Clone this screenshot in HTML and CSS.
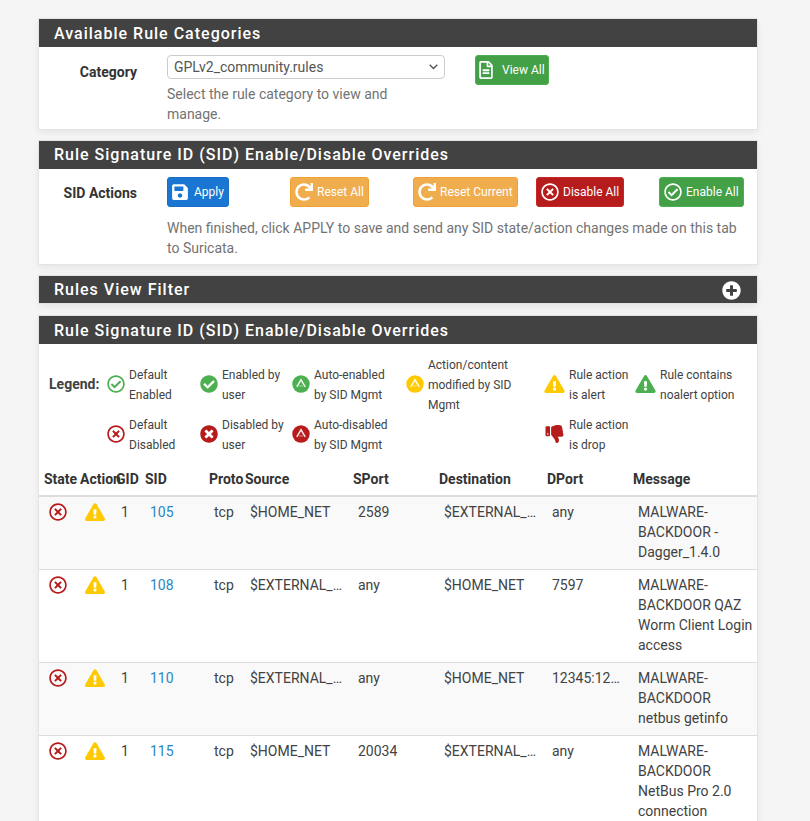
FILE: index.html
```html
<!DOCTYPE html>
<html lang="en">
<head>
    <meta charset="UTF-8">
    <meta name="viewport" content="width=device-width, initial-scale=1.0">
    <title>Suricata Rules</title>
    <link rel="stylesheet" href="styles.css">
</head>
<body>
    <!-- Icon set, reused below with <use> -->
    <svg class="icon-defs" aria-hidden="true">
        <symbol id="i-save" viewBox="0 0 448 512"><path d="M433.941 129.941l-83.882-83.882A48 48 0 0 0 316.118 32H48C21.49 32 0 53.49 0 80v352c0 26.51 21.49 48 48 48h352c26.51 0 48-21.49 48-48V163.882a48 48 0 0 0-14.059-33.941zM224 416c-35.346 0-64-28.654-64-64 0-35.346 28.654-64 64-64s64 28.654 64 64c0 35.346-28.654 64-64 64zm96-304.52V212c0 6.627-5.373 12-12 12H76c-6.627 0-12-5.373-12-12V108c0-6.627 5.373-12 12-12h228.52c3.183 0 6.235 1.264 8.485 3.515l3.48 3.48A11.996 11.996 0 0 1 320 111.48z"/></symbol>
        <symbol id="i-redo" viewBox="0 0 512 512"><path d="M500.33 0h-47.41a12 12 0 0 0-12 12.57l4 82.76A247.42 247.42 0 0 0 256 8C119.34 8 8.05 119.53 8 256.19 7.95 393.07 119.06 504 256 504a247.1 247.1 0 0 0 166.18-63.91 12 12 0 0 0 .48-17.43l-34-34a12 12 0 0 0-16.38-.55A176 176 0 1 1 402.1 157.8l-101.53-4.87a12 12 0 0 0-12.57 12v47.41a12 12 0 0 0 12 12h200.33a12 12 0 0 0 12-12V12a12 12 0 0 0-12-12z"/></symbol>
        <symbol id="i-file" viewBox="0 0 384 512"><path d="M288 248v28c0 6.6-5.4 12-12 12H108c-6.6 0-12-5.4-12-12v-28c0-6.6 5.4-12 12-12h168c6.6 0 12 5.4 12 12zm-12 72H108c-6.6 0-12 5.4-12 12v28c0 6.6 5.4 12 12 12h168c6.6 0 12-5.4 12-12v-28c0-6.6-5.4-12-12-12zm108-188.1V464c0 26.5-21.5 48-48 48H48c-26.5 0-48-21.5-48-48V48C0 21.5 21.5 0 48 0h204.1C264.8 0 277 5.1 286 14.1L369.9 98c9 8.9 14.1 21.2 14.1 33.9zm-128-80V128h76.1L256 51.9zM336 464V176H232c-13.3 0-24-10.7-24-24V48H48v416h288z"/></symbol>
        <symbol id="i-times-o" viewBox="0 0 512 512"><path d="M256 8C119 8 8 119 8 256s111 248 248 248 248-111 248-248S393 8 256 8zm0 448c-110.5 0-200-89.5-200-200S145.5 56 256 56s200 89.5 200 200-89.5 200-200 200zm101.8-262.2L295.6 256l62.2 62.2c4.7 4.7 4.7 12.3 0 17l-22.6 22.6c-4.7 4.7-12.3 4.7-17 0L256 295.6l-62.2 62.2c-4.7 4.7-12.3 4.7-17 0l-22.6-22.6c-4.7-4.7-4.7-12.3 0-17l62.2-62.2-62.2-62.2c-4.7-4.7-4.7-12.3 0-17l22.6-22.6c4.7-4.7 12.3-4.7 17 0l62.2 62.2 62.2-62.2c4.7-4.7 12.3-4.7 17 0l22.6 22.6c4.7 4.7 4.7 12.3 0 17z"/></symbol>
        <symbol id="i-check-o" viewBox="0 0 512 512"><path d="M256 8C119.033 8 8 119.033 8 256s111.033 248 248 248 248-111.033 248-248S392.967 8 256 8zm0 48c110.532 0 200 89.451 200 200 0 110.532-89.451 200-200 200-110.532 0-200-89.451-200-200 0-110.532 89.451-200 200-200m140.204 130.267l-22.536-22.718c-4.667-4.705-12.265-4.736-16.97-.068L215.346 303.697l-59.792-60.277c-4.667-4.705-12.265-4.736-16.97-.069l-22.719 22.536c-4.705 4.667-4.736 12.265-.068 16.971l90.781 91.516c4.667 4.705 12.265 4.736 16.97.068l172.589-171.204c4.704-4.668 4.734-12.266.067-16.971z"/></symbol>
        <symbol id="i-check" viewBox="0 0 512 512"><path d="M504 256c0 136.967-111.033 248-248 248S8 392.967 8 256 119.033 8 256 8s248 111.033 248 248zM227.314 387.314l184-184c6.248-6.248 6.248-16.379 0-22.627l-22.627-22.627c-6.248-6.249-16.379-6.249-22.628 0L216 308.118l-70.059-70.059c-6.248-6.248-16.379-6.248-22.628 0l-22.627 22.627c-6.248 6.248-6.248 16.379 0 22.627l104 104c6.249 6.249 16.379 6.249 22.628.001z"/></symbol>
        <symbol id="i-times" viewBox="0 0 512 512"><path d="M256 8C119 8 8 119 8 256s111 248 248 248 248-111 248-248S393 8 256 8zm121.6 313.1c4.7 4.7 4.7 12.3 0 17L338 377.6c-4.7 4.7-12.3 4.7-17 0L256 312l-65.1 65.6c-4.7 4.7-12.3 4.7-17 0L134.4 338c-4.7-4.7-4.7-12.3 0-17l65.6-65-65.6-65.1c-4.7-4.7-4.7-12.3 0-17l39.6-39.6c4.7-4.7 12.3-4.7 17 0l65 65.7 65.1-65.6c4.7-4.7 12.3-4.7 17 0l39.6 39.6c4.7 4.7 4.7 12.3 0 17L312 256l65.6 65.1z"/></symbol>
        <symbol id="i-auto" viewBox="0 0 512 512">
            <circle cx="256" cy="256" r="248"/>
            <path class="auto-mark" d="M136 340L256 136L376 340"/>
            <path class="auto-bar" d="M196 312H316"/>
        </symbol>
        <symbol id="i-warn" viewBox="0 0 576 512"><path d="M569.517 440.013C587.975 472.007 564.806 512 527.94 512H48.054c-36.937 0-59.999-40.055-41.577-71.987L246.423 24.995c18.467-32.009 64.72-31.951 83.154 0l239.94 415.018zM288 354c-25.405 0-46 20.595-46 46s20.595 46 46 46 46-20.595 46-46-20.595-46-46-46zm-43.673-165.346l7.418 136c.347 6.364 5.609 11.346 11.982 11.346h48.546c6.373 0 11.635-4.982 11.982-11.346l7.418-136c.375-6.874-5.098-12.654-11.982-12.654h-63.383c-6.884 0-12.356 5.78-11.981 12.654z"/></symbol>
        <symbol id="i-drop" viewBox="0 0 512 512"><path d="M0 56v240c0 13.255 10.745 24 24 24h80c13.255 0 24-10.745 24-24V56c0-13.255-10.745-24-24-24H24C10.745 32 0 42.745 0 56zm40 200c0-13.255 10.745-24 24-24s24 10.745 24 24-10.745 24-24 24-24-10.745-24-24zm272 256c-20.183 0-29.485-39.293-33.931-57.795-5.206-21.666-10.589-44.07-25.393-58.902-32.469-32.524-49.503-73.967-89.117-113.111a11.98 11.98 0 0 1-3.558-8.521V59.901c0-6.541 5.243-11.878 11.783-11.998 15.831-.29 36.694-9.079 52.651-16.178C256.189 17.598 295.709.017 343.995 0h2.844c42.777 0 93.363.413 113.774 29.737 8.392 12.057 10.446 27.034 6.148 44.632 16.312 17.053 25.063 48.863 16.382 74.757 17.544 23.432 19.143 56.132 9.308 79.469l.11.11c11.893 11.949 19.523 31.259 19.439 49.197-.156 30.352-26.157 58.098-59.553 58.098H350.723C358.03 364.34 384 388.132 384 430.548 384 496 336 512 312 512z"/></symbol>
        <symbol id="i-plus" viewBox="0 0 512 512"><path d="M256 8C119 8 8 119 8 256s111 248 248 248 248-111 248-248S393 8 256 8zm144 276c0 6.6-5.4 12-12 12h-92v92c0 6.6-5.4 12-12 12h-56c-6.6 0-12-5.4-12-12v-92h-92c-6.6 0-12-5.4-12-12v-56c0-6.6 5.4-12 12-12h92v-92c0-6.6 5.4-12 12-12h56c6.6 0 12 5.4 12 12v92h92c6.6 0 12 5.4 12 12v56z"/></symbol>
    </svg>

    <div class="container">
        <section class="panel">
            <h2 class="panel-title panel-title-low">Available Rule Categories</h2>
            <div class="panel-body category-body">
                <label class="row-label" for="category">Category</label>
                <div class="category-field">
                    <select id="category" class="select">
                        <option>GPLv2_community.rules</option>
                    </select>
                    <p class="help">Select the rule category to view and manage.</p>
                </div>
                <button class="btn btn-green btn-view"><svg class="icon icon-file"><use href="#i-file"/></svg>View All</button>
            </div>
        </section>

        <section class="panel">
            <h2 class="panel-title">Rule Signature ID (SID) Enable/Disable Overrides</h2>
            <div class="panel-body actions-body">
                <div class="row-label">SID Actions</div>
                <div class="actions">
                    <div class="action-buttons">
                        <div><button class="btn btn-blue btn-apply"><svg class="icon icon-save"><use href="#i-save"/></svg>Apply</button></div>
                        <div><button class="btn btn-orange"><svg class="icon"><use href="#i-redo"/></svg>Reset All</button></div>
                        <div><button class="btn btn-orange"><svg class="icon"><use href="#i-redo"/></svg>Reset Current</button></div>
                        <div><button class="btn btn-red"><svg class="icon"><use href="#i-times-o"/></svg>Disable All</button></div>
                        <div><button class="btn btn-green"><svg class="icon"><use href="#i-check-o"/></svg>Enable All</button></div>
                    </div>
                    <p class="help help-actions">When finished, click APPLY to save and send any SID state/action changes made on this tab to Suricata.</p>
                </div>
            </div>
        </section>

        <section class="panel panel-collapsed">
            <h2 class="panel-title panel-title-short">Rules View Filter<svg class="icon icon-plus"><use href="#i-plus"/></svg></h2>
        </section>

        <section class="panel panel-rules">
            <h2 class="panel-title panel-title-low">Rule Signature ID (SID) Enable/Disable Overrides</h2>

            <div class="legend">
                <div class="legend-title">Legend:</div>
                <div class="legend-item"><svg class="icon c-green"><use href="#i-check-o"/></svg><span>Default Enabled</span></div>
                <div class="legend-item"><svg class="icon c-green"><use href="#i-check"/></svg><span>Enabled by user</span></div>
                <div class="legend-item legend-item-auto"><svg class="icon c-green"><use href="#i-auto"/></svg><span>Auto-enabled by SID Mgmt</span></div>
                <div class="legend-item"><svg class="icon c-yellow"><use href="#i-auto"/></svg><span>Action/content modified by SID Mgmt</span></div>
                <div class="legend-item"><svg class="icon icon-warn c-yellow"><use href="#i-warn"/></svg><span>Rule action is alert</span></div>
                <div class="legend-item"><svg class="icon icon-warn c-green"><use href="#i-warn"/></svg><span>Rule contains noalert option</span></div>
                <div></div>
                <div class="legend-item"><svg class="icon c-red"><use href="#i-times-o"/></svg><span>Default Disabled</span></div>
                <div class="legend-item"><svg class="icon c-red"><use href="#i-times"/></svg><span>Disabled by user</span></div>
                <div class="legend-item legend-item-auto"><svg class="icon c-red"><use href="#i-auto"/></svg><span>Auto-disabled by SID Mgmt</span></div>
                <div></div>
                <div class="legend-item"><svg class="icon icon-warn c-red"><use href="#i-drop"/></svg><span>Rule action is drop</span></div>
                <div></div>
            </div>

            <table class="rules">
                <colgroup>
                    <col class="col-state"><col class="col-action"><col class="col-gid"><col class="col-sid"><col class="col-proto">
                    <col class="col-source"><col class="col-sport"><col class="col-dest"><col class="col-dport"><col class="col-msg">
                </colgroup>
                <thead>
                    <tr>
                        <th>State</th><th>Action</th><th class="th-gid">GID</th><th>SID</th><th>Proto</th>
                        <th>Source</th><th>SPort</th><th>Destination</th><th>DPort</th><th>Message</th>
                    </tr>
                </thead>
                <tbody>
                    <tr>
                        <td><svg class="icon c-red"><use href="#i-times-o"/></svg></td>
                        <td><svg class="icon icon-warn c-yellow"><use href="#i-warn"/></svg></td>
                        <td>1</td><td><a href="#">105</a></td><td>tcp</td>
                        <td class="clip">$HOME_NET</td><td class="clip">2589</td><td class="clip">$EXTERNAL_NET</td><td class="clip">any</td>
                        <td>MALWARE-BACKDOOR - Dagger_1.4.0</td>
                    </tr>
                    <tr>
                        <td><svg class="icon c-red"><use href="#i-times-o"/></svg></td>
                        <td><svg class="icon icon-warn c-yellow"><use href="#i-warn"/></svg></td>
                        <td>1</td><td><a href="#">108</a></td><td>tcp</td>
                        <td class="clip">$EXTERNAL_NET</td><td class="clip">any</td><td class="clip">$HOME_NET</td><td class="clip">7597</td>
                        <td>MALWARE-BACKDOOR QAZ Worm Client Login access</td>
                    </tr>
                    <tr>
                        <td><svg class="icon c-red"><use href="#i-times-o"/></svg></td>
                        <td><svg class="icon icon-warn c-yellow"><use href="#i-warn"/></svg></td>
                        <td>1</td><td><a href="#">110</a></td><td>tcp</td>
                        <td class="clip">$EXTERNAL_NET</td><td class="clip">any</td><td class="clip">$HOME_NET</td><td class="clip">12345:12346</td>
                        <td>MALWARE-BACKDOOR netbus getinfo</td>
                    </tr>
                    <tr>
                        <td><svg class="icon c-red"><use href="#i-times-o"/></svg></td>
                        <td><svg class="icon icon-warn c-yellow"><use href="#i-warn"/></svg></td>
                        <td>1</td><td><a href="#">115</a></td><td>tcp</td>
                        <td class="clip">$HOME_NET</td><td class="clip">20034</td><td class="clip">$EXTERNAL_NET</td><td class="clip">any</td>
                        <td>MALWARE-BACKDOOR NetBus Pro 2.0 connection</td>
                    </tr>
                </tbody>
            </table>
        </section>
    </div>
</body>
</html>
```
FILE: styles.css
```css
html, body {
    height: 100%;
    overflow: hidden;
}

body {
    font-family: Roboto, "Liberation Sans", sans-serif;
    font-size: 14px;
    line-height: 20px;
    margin: 0;
    padding: 0;
    background-color: #f5f5f5;
    color: #424242;
}

.icon-defs {
    display: none;
}

.container {
    width: 718px;
    margin-left: 39px;
    padding-top: 19px;
}

/* Panels */
.panel {
    background-color: #fff;
    margin-bottom: 12px;
    box-shadow: 0 0 0 1px #e4e4e4, 0 3px 8px rgba(0, 0, 0, 0.08);
}

.panel-collapsed {
    margin-bottom: 13px;
}

.panel-title {
    display: flex;
    justify-content: space-between;
    align-items: center;
    margin: 0;
    padding: 4px 15px;
    background-color: #424242;
    color: #fff;
    font-size: 16px;
    font-weight: 500;
    letter-spacing: 1px;
    line-height: 20px;
}

.panel-title-low {
    padding-top: 5px;
    padding-bottom: 3px;
}

.panel-title-short {
    height: 19px;
    padding-right: 16px;
}

.panel-body {
    display: flex;
    background-color: #fff;
}

.row-label {
    width: 98px;
    flex-shrink: 0;
    text-align: right;
    font-weight: 700;
    color: #333;
}

.help {
    margin: 0;
    color: #737373;
}

/* Category row */
.category-body {
    padding-top: 8px;
    padding-bottom: 5px;
}

.category-body .row-label {
    padding-top: 7px;
}

.category-field {
    width: 278px;
    margin-left: 30px;
}

.select {
    display: block;
    width: 100%;
    height: 24px;
    padding: 0 24px 0 6px;
    border: 1px solid #ccc;
    border-radius: 4px;
    background: #fff url("data:image/svg+xml,%3Csvg xmlns='http://www.w3.org/2000/svg' width='9' height='6'%3E%3Cpath d='M.7.8l3.8 3.8L8.3.8' fill='none' stroke='%23555' stroke-width='1.4'/%3E%3C/svg%3E") no-repeat right 6px center;
    appearance: none;
    color: #555;
    font-family: inherit;
    font-size: 14px;
    margin-bottom: 5px;
}

.category-field .help {
    margin-top: 5px;
}

/* SID actions */
.actions-body {
    padding-top: 8px;
    padding-bottom: 6px;
}

.actions-body .row-label {
    padding-top: 6px;
}

.actions {
    margin-left: 30px;
}

.action-buttons {
    display: grid;
    grid-template-columns: repeat(5, 123px);
}

.help-actions {
    width: 580px;
    margin-top: 11px;
}

/* Buttons */
.btn {
    display: inline-flex;
    align-items: center;
    height: 30px;
    padding: 0 4px;
    border: 1px solid transparent;
    border-radius: 3px;
    color: #fff;
    font-family: inherit;
    font-size: 12px;
    white-space: nowrap;
    cursor: pointer;
}

.btn .icon {
    margin-right: 4px;
}

.btn .icon-save {
    margin-right: 6px;
}

.btn .icon-file {
    width: 14px;
    margin-right: 9px;
}

.btn-view {
    margin-left: 30px;
    padding: 0 3px;
}

.btn-blue {
    background-color: #1976d2;
    border-color: #1a6fc4;
}

.btn-orange {
    background-color: #f0ad4e;
    border-color: #eea236;
}

.btn-red {
    background-color: #b71c1c;
    border-color: #c62828;
}

.btn-green {
    background-color: #43a047;
    border-color: #4caf50;
}

/* Icons */
.icon {
    width: 18px;
    height: 18px;
    flex-shrink: 0;
    fill: currentColor;
}

.icon-save {
    width: 16px;
}

.icon-warn {
    width: 20px;
}

.icon-plus {
    width: 19px;
    height: 19px;
    margin-top: 1px;
    color: #fff;
}

.auto-mark,
.auto-bar {
    fill: none;
    stroke: #fff;
    stroke-width: 42;
    opacity: 0.9;
}

.auto-bar {
    stroke-width: 26;
    opacity: 0.55;
}

.c-green {
    color: #4caf50;
}

.c-red {
    color: #b71c1c;
}

.c-yellow {
    color: #ffc900;
}

/* Legend */
.legend {
    display: grid;
    grid-template-columns: 58px 93px 92px 114px 138px 91px 112px;
    grid-template-rows: 60px 40px;
    padding: 11px 0 10px 10px;
    font-size: 12px;
    color: #424242;
}

.legend-title {
    align-self: center;
    margin-top: -2px;
    font-size: 14px;
    font-weight: 700;
}

.legend-item {
    display: flex;
    align-items: center;
    gap: 4px;
    padding-right: 4px;
}

.legend-item .icon {
    margin-bottom: 2px;
}

.legend-item .icon-warn {
    width: 21px;
}

.legend-item-auto {
    padding-right: 12px;
}

/* Rules table */
.rules {
    width: 100%;
    table-layout: fixed;
    border-collapse: collapse;
}

.col-state { width: 36px; }
.col-action { width: 36px; }
.col-gid { width: 29px; }
.col-sid { width: 64px; }
.col-proto { width: 36px; }
.col-source { width: 108px; }
.col-sport { width: 86px; }
.col-dest { width: 108px; }
.col-dport { width: 86px; }

.rules th {
    padding: 4px 5px 6px;
    border-bottom: 2px solid #ddd;
    text-align: left;
    font-weight: 700;
    color: #333;
    white-space: nowrap;
}

.rules td {
    padding: 5px 5px 7px 10px;
    vertical-align: top;
    border-bottom: 1px solid #ddd;
}

.rules td:first-child,
.rules td:nth-child(2) {
    padding-left: 10px;
    padding-right: 0;
}

.rules td:last-child {
    padding-right: 2px;
}

.rules td .icon {
    display: block;
    margin-top: 1px;
}

.rules tbody tr:nth-child(odd) {
    background-color: #f9f9f9;
}

.clip {
    white-space: nowrap;
    overflow: hidden;
    text-overflow: ellipsis;
}

.rules a {
    color: #2d86c1;
    text-decoration: none;
}
```
